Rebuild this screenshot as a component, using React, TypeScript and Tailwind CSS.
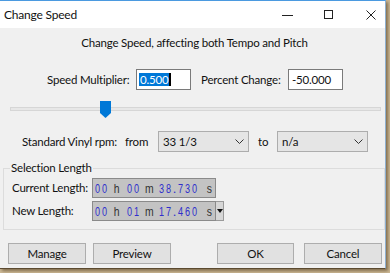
import React from "react";

const ui = "font-['Lato',sans-serif] text-[11.5px] tracking-[-0.2px] text-[#111]";

function Chevron() {
  return (
    <svg width="9" height="5" viewBox="0 0 9 5" className="shrink-0">
      <path d="M0.5 0.5 L4.5 4.5 L8.5 0.5" fill="none" stroke="#333" strokeWidth="1" />
    </svg>
  );
}

function Select({ value }: { value: string }) {
  return (
    <div className="w-[91px] h-[21px] shrink-0 bg-[#e5e5e5] border border-[#adadad] flex items-center pl-[4px] pr-[4px]">
      <span className="flex-1 leading-none">{value}</span>
      <Chevron />
    </div>
  );
}

function Btn({ label, className }: { label: string; className?: string }) {
  return (
    <div
      className={
        "h-[21px] shrink-0 bg-[#e1e1e1] border border-[#adadad] flex items-center justify-center leading-none " +
        (className ?? "")
      }
    >
      {label}
    </div>
  );
}

function D({ c }: { c: string }) {
  return (
    <span className="block w-[7px] shrink-0 text-center text-[#2f2fcc] [transform:scaleX(0.7)]">{c}</span>
  );
}

function L({ c, className }: { c: string; className: string }) {
  return (
    <span className={"block shrink-0 text-center text-[#333] " + className}>
      <span className="inline-block [transform:scaleX(0.8)]">{c}</span>
    </span>
  );
}

function TimeBox({ t, arrow }: { t: string; arrow?: boolean }) {
  const ch = t.split("");
  return (
    <div className="flex items-stretch shrink-0">
      <div className="w-[124px] h-[20px] bg-[#c3c3c3] border border-[#8a8a8a] flex items-center pl-[1px] font-['Liberation_Sans',sans-serif] text-[13px] tracking-normal leading-none">
        <D c={ch[0]} />
        <D c={ch[1]} />
        <L c={ch[2]} className="w-[18px]" />
        <D c={ch[3]} />
        <D c={ch[4]} />
        <L c={ch[5]} className="w-[18px]" />
        <D c={ch[6]} />
        <D c={ch[7]} />
        <span className="block w-[5px] shrink-0 text-center text-[#2f2fcc]">{ch[8]}</span>
        <D c={ch[9]} />
        <D c={ch[10]} />
        <D c={ch[11]} />
        <L c={ch[12]} className="w-[17px] pl-[6px]" />
      </div>
      {arrow && (
        <div className="w-[8px] h-[20px] bg-[#d6d6d6] border-y border-r border-[#9a9a9a] flex items-center justify-center">
          <svg width="6" height="4" viewBox="0 0 6 4">
            <path d="M0 0 H6 L3 4 Z" fill="#111" />
          </svg>
        </div>
      )}
    </div>
  );
}

export default function App() {
  return (
    <div className={"w-[390px] h-[273px] bg-[#cdb996] overflow-hidden " + ui}>
      <div className="w-[386px] h-[269px] flex flex-col border-t border-t-[#4b9ae0] border-r border-r-[#8fb0d0] border-b border-b-[#5b4a30] shadow-[2px_2px_3px_rgba(70,50,20,0.55)]">
        {/* Title bar */}
        <div className="h-[27px] bg-white flex items-center pl-[4px] pr-[9px] shrink-0">
          <span className="leading-none whitespace-nowrap text-[12px]">Change Speed</span>
          <div className="flex-1" />
          <svg width="11" height="10" viewBox="0 0 11 10">
            <path d="M0 5.5 H11" stroke="#222" strokeWidth="1" />
          </svg>
          <svg width="9" height="9" viewBox="0 0 9 9" className="ml-[31px]">
            <rect x="0.5" y="0.5" width="8" height="8" fill="none" stroke="#222" strokeWidth="1" />
          </svg>
          <svg width="10" height="10" viewBox="0 0 10 10" className="ml-[33px]">
            <path d="M0.5 0.5 L9.5 9.5 M9.5 0.5 L0.5 9.5" stroke="#222" strokeWidth="1" />
          </svg>
        </div>

        {/* Content */}
        <div className="flex-1 bg-[#f0f0f0] flex flex-col">
          <div className="pt-[7px] h-[23px] leading-[16px] text-center pl-[4px] whitespace-nowrap">
            Change Speed, affecting both Tempo and Pitch
          </div>

          {/* Row 1 */}
          <div className="mt-[18px] h-[21px] flex items-center pl-[47px]">
            <span className="w-[89px] shrink-0 whitespace-nowrap">Speed Multiplier:</span>
            <div className="w-[55px] h-[21px] shrink-0 bg-white border border-[#7a7a7a] flex items-center pl-[2px]">
              <span className="bg-[#0078d7] text-white leading-[13px] h-[13px] px-[1px]">0.500</span>
              <span className="w-[2px] h-[13px] bg-black" />
            </div>
            <span className="ml-[10px] w-[87px] shrink-0 whitespace-nowrap">Percent Change:</span>
            <div className="w-[55px] h-[21px] shrink-0 bg-white border border-[#7a7a7a] flex items-center pl-[3px]">
              <span className="leading-none">-50.000</span>
            </div>
          </div>

          {/* Slider */}
          <div className="mt-[11px] h-[17px] relative">
            <div className="ml-[10px] mt-[6px] w-[371px] h-[4px] bg-[#e7e7e7] border border-[#d6d6d6]" />
            <svg width="11" height="17" viewBox="0 0 11 17" className="absolute left-[100px] top-0">
              <path d="M0 0 H11 V12 L5.5 17 L0 12 Z" fill="#0078d7" />
            </svg>
          </div>

          {/* Row 2 */}
          <div className="mt-[13px] h-[21px] flex items-center pl-[22px]">
            <span className="w-[103px] shrink-0 whitespace-nowrap">Standard Vinyl rpm:</span>
            <span className="w-[33px] shrink-0">from</span>
            <Select value="33 1/3" />
            <span className="ml-[9px] w-[19px] shrink-0">to</span>
            <Select value="n/a" />
          </div>

          {/* Group box */}
          <div className="mt-[16px] ml-[3px] w-[382px] h-[62px] border border-[#dcdcdc] relative flex flex-col pl-[8px] pt-[9px] gap-[3px]">
            <span className="absolute left-[6px] top-[-9px] bg-[#f0f0f0] px-[1px] leading-[16px] whitespace-nowrap">
              Selection Length
            </span>
            <div className="flex items-center h-[20px]">
              <span className="w-[80px] shrink-0 whitespace-nowrap">Current Length:</span>
              <TimeBox t="00h00m38.730s" />
            </div>
            <div className="flex items-center h-[20px]">
              <span className="w-[80px] shrink-0 whitespace-nowrap">New Length:</span>
              <TimeBox t="00h01m17.460s" arrow />
            </div>
          </div>

          {/* Buttons */}
          <div className="mt-[13px] flex items-center pl-[8px]">
            <Btn label="Manage" className="w-[78px]" />
            <Btn label="Preview" className="w-[78px] ml-[7px]" />
            <Btn label="OK" className="w-[77px] ml-[46px]" />
            <Btn label="Cancel" className="w-[78px] ml-[10px]" />
          </div>
        </div>
      </div>
    </div>
  );
}
